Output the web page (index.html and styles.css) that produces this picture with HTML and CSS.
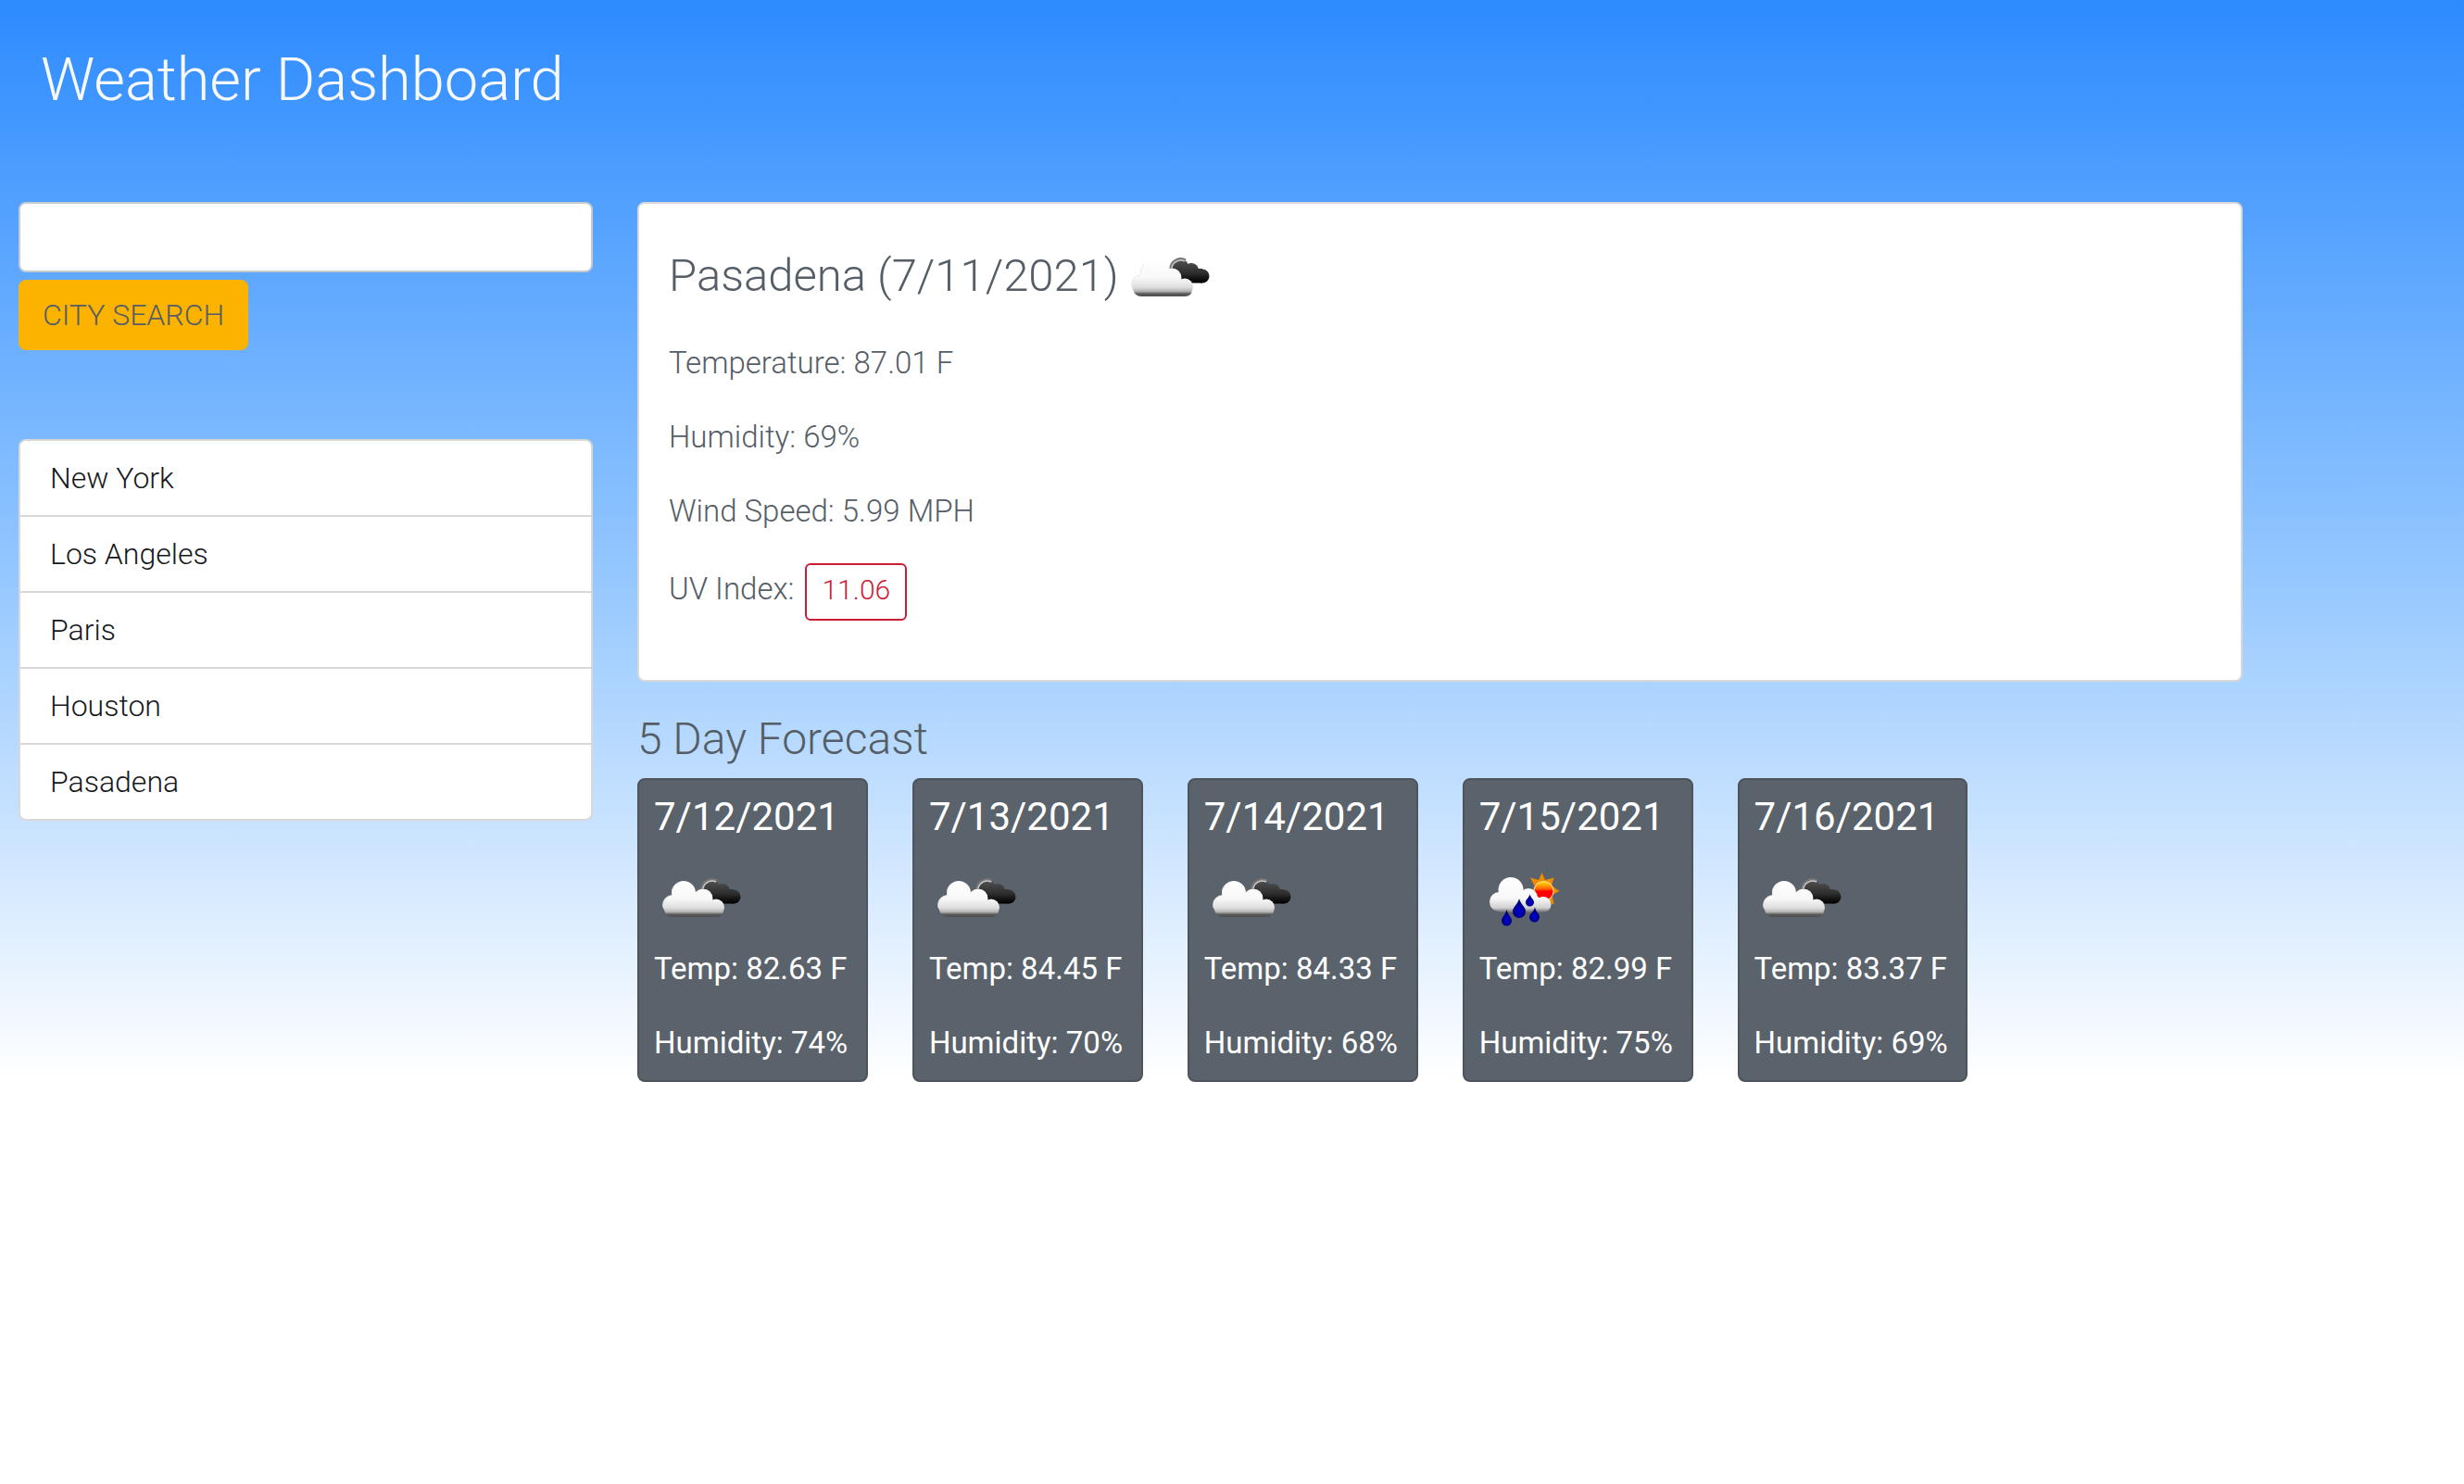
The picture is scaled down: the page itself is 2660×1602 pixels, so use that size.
FILE: index.html
```
<!DOCTYPE html>
<html lang="en">
<head>
  <meta charset="utf-8">
  <meta name="viewport" content="width=device-width, initial-scale=1">
  <title>Weather Dashboard</title>
  <link rel="stylesheet" href="styles.css">
</head>
<body>
  <svg class="icon-defs" aria-hidden="true">
    <defs>
      <linearGradient id="cloud-light" gradientUnits="userSpaceOnUse" x1="0" y1="28" x2="0" y2="68">
        <stop offset="0" stop-color="#ffffff"/>
        <stop offset=".5" stop-color="#f8f8f8"/>
        <stop offset=".75" stop-color="#dedede"/>
        <stop offset=".86" stop-color="#b4b4b4"/>
        <stop offset=".93" stop-color="#5a5a5a"/>
        <stop offset="1" stop-color="#4e4e4e"/>
      </linearGradient>
      <linearGradient id="cloud-dark" gradientUnits="userSpaceOnUse" x1="0" y1="27" x2="0" y2="53">
        <stop offset="0" stop-color="#555555"/>
        <stop offset=".6" stop-color="#2e2e2e"/>
        <stop offset="1" stop-color="#000000"/>
      </linearGradient>
      <linearGradient id="cloud-rain" gradientUnits="userSpaceOnUse" x1="0" y1="25" x2="0" y2="63">
        <stop offset="0" stop-color="#ffffff"/>
        <stop offset=".6" stop-color="#f8f8f8"/>
        <stop offset=".87" stop-color="#d0d0d0"/>
        <stop offset="1" stop-color="#666666"/>
      </linearGradient>
      <linearGradient id="sun-disc" x1="0" y1="0" x2="0" y2="1">
        <stop offset="0" stop-color="#ffe000"/>
        <stop offset=".4" stop-color="#ff5a00"/>
        <stop offset=".5" stop-color="#ff0000"/>
      </linearGradient>
      <radialGradient id="drop-fill" cx=".5" cy=".65" r=".5">
        <stop offset="0" stop-color="#0000dc"/>
        <stop offset="1" stop-color="#00006e"/>
      </radialGradient>
      <filter id="soften" x="-5%" y="-5%" width="110%" height="110%">
        <feGaussianBlur stdDeviation=".6"/>
      </filter>
      <symbol id="icon-clouds" viewBox="0 0 100 100">
        <g filter="url(#soften)">
          <g fill="url(#cloud-dark)">
            <circle cx="62" cy="37" r="9.500"/>
            <circle cx="74" cy="40" r="8"/>
            <circle cx="86" cy="46" r="7.500"/>
            <rect x="56" y="38" width="30" height="15.500"/>
          </g>
          <path d="M50 41Q52 40 52 36A11 11 0 0 1 68 29" fill="none" stroke="#777" stroke-width="3"/>
          <path d="M53 37A10 10 0 0 1 67 30" fill="none" stroke="#c8c8c8" stroke-width="1.500"/>
          <g fill="url(#cloud-light)">
            <circle cx="32" cy="42" r="13"/>
            <circle cx="20" cy="55" r="10.500"/>
            <circle cx="53" cy="48" r="10.500"/>
            <circle cx="67" cy="57.500" r="9"/>
            <path d="M12 54H75V60Q75 68 67 68H20Q13 68 11 60Z"/>
            <rect x="30" y="44" width="24" height="20"/>
          </g>
          <path d="M23 33A13 13 0 0 0 19.500 44.500A10.500 10.500 0 0 0 10 58" fill="none" stroke="#e6e6e6" stroke-width=".8"/>
        </g>
      </symbol>
      <symbol id="icon-rain" viewBox="0 0 100 100">
        <g filter="url(#soften)">
          <path fill="#f08c00" d="M67.500 20L71 28L80.500 25.500L78 34L86.500 40L78.500 44L80.500 54L70 52L58 40L60 35L55 25.500L64 28Z"/>
          <circle cx="69.500" cy="40" r="11" fill="#ffd58a"/>
          <circle cx="69.500" cy="40" r="10" fill="url(#sun-disc)"/>
          <g fill="url(#cloud-rain)">
            <circle cx="34" cy="38.500" r="13.500"/>
            <circle cx="21.500" cy="51.500" r="10.500"/>
            <circle cx="53" cy="47" r="10"/>
            <circle cx="69" cy="54.500" r="8.500"/>
            <path d="M22 40H54L69 50V63H22Z"/>
          </g>
          <g fill="url(#drop-fill)">
            <path d="M29.500 60C31 66 35 68 35 72A5.500 5.500 0 0 1 24 72C24 68 28 66 29.500 60Z"/>
            <path d="M43 48C45 55 50 57 50 62A7 7 0 0 1 36 62C36 57 41 55 43 48Z"/>
            <path d="M54.500 43.500C56 48 59 49 59 52A4.500 4.500 0 0 1 50 52C50 49 53 48 54.500 43.500Z"/>
            <path d="M60 57C61 63 65 64 65 68A5.500 5.500 0 0 1 54 68C54 64 59 63 60 57Z"/>
          </g>
        </g>
      </symbol>
    </defs>
  </svg>

  <header class="page-header">
    <h1>Weather Dashboard</h1>
  </header>

  <main class="layout">
    <aside class="sidebar">
      <form class="search" onsubmit="return false">
        <input class="search-input" type="text" aria-label="City">
        <button class="search-button" type="submit">CITY SEARCH</button>
      </form>
      <ul class="history">
        <li>New York</li>
        <li>Los Angeles</li>
        <li>Paris</li>
        <li>Houston</li>
        <li>Pasadena</li>
      </ul>
    </aside>

    <div class="content">
      <section class="current">
        <h2 class="current-title">Pasadena (7/11/2021) <svg class="weather-icon" role="img" aria-label="Broken clouds"><use href="#icon-clouds"/></svg></h2>
        <p>Temperature: 87.01 F</p>
        <p>Humidity: 69%</p>
        <p>Wind Speed: 5.99 MPH</p>
        <p>UV Index: <button class="uv" type="button">11.06</button></p>
      </section>

      <section>
        <h2 class="forecast-title">5 Day Forecast</h2>
        <div class="forecast">
          <article class="day">
            <h3>7/12/2021</h3>
            <svg class="weather-icon" role="img" aria-label="Broken clouds"><use href="#icon-clouds"/></svg>
            <p>Temp: 82.63 F</p>
            <p>Humidity: 74%</p>
          </article>
          <article class="day">
            <h3>7/13/2021</h3>
            <svg class="weather-icon" role="img" aria-label="Broken clouds"><use href="#icon-clouds"/></svg>
            <p>Temp: 84.45 F</p>
            <p>Humidity: 70%</p>
          </article>
          <article class="day">
            <h3>7/14/2021</h3>
            <svg class="weather-icon" role="img" aria-label="Broken clouds"><use href="#icon-clouds"/></svg>
            <p>Temp: 84.33 F</p>
            <p>Humidity: 68%</p>
          </article>
          <article class="day">
            <h3>7/15/2021</h3>
            <svg class="weather-icon" role="img" aria-label="Rain with sun"><use href="#icon-rain"/></svg>
            <p>Temp: 82.99 F</p>
            <p>Humidity: 75%</p>
          </article>
          <article class="day">
            <h3>7/16/2021</h3>
            <svg class="weather-icon" role="img" aria-label="Broken clouds"><use href="#icon-clouds"/></svg>
            <p>Temp: 83.37 F</p>
            <p>Humidity: 69%</p>
          </article>
        </div>
      </section>
    </div>
  </main>
</body>
</html>
```
FILE: styles.css
```
*,
*::before,
*::after {
  box-sizing: border-box;
}

html {
  background: #fff;
}

body {
  margin: 0;
  background: linear-gradient(#2d8bff, #92c6ff 52%, #fff);
  color: #555d66;
  font-family: Roboto, "Open Sans", sans-serif;
  font-size: 33px;
  font-weight: 300;
  line-height: 48px;
}

h1,
h2,
h3,
p,
ul {
  margin: 0;
  padding: 0;
  font-weight: inherit;
}

.icon-defs {
  position: absolute;
  width: 0;
  height: 0;
}

.weather-icon {
  width: 100px;
  height: 100px;
  flex: none;
}

.page-header {
  padding: 48px 44px 94px;
}

.page-header h1 {
  color: #f8f9fa;
  font-size: 65px;
  line-height: 76px;
}

.layout {
  display: grid;
  grid-template-columns: repeat(12, minmax(0, 1fr));
  column-gap: 48px;
  padding: 0 16px 0 20px;
}

.sidebar {
  grid-column: span 3;
  font-size: 32px;
}

.content {
  grid-column: span 8;
}

.search {
  display: flex;
  flex-direction: column;
  align-items: flex-start;
  gap: 8px;
  margin-bottom: 96px;
}

.search-input,
.search-button {
  height: 76px;
  border-radius: 8px;
  font: inherit;
}

.search-input {
  width: 100%;
  padding: 12px 24px;
  border: 2px solid #c5cbd1;
  background: #fff;
  color: #212529;
}

.search-button {
  padding: 0 24px;
  border: 2px solid #fcb300;
  background: #fcb300;
  color: #555d66;
}

.history {
  list-style: none;
  overflow: hidden;
  border: 2px solid #d8d8d8;
  border-radius: 8px;
  background: #fff;
  color: #16191c;
}

.history li {
  padding: 16px 32px;
}

.history li + li {
  border-top: 2px solid #d8d8d8;
}

.current {
  display: grid;
  gap: 32px;
  padding: 32px;
  padding-bottom: 64px;
  border: 2px solid #d8d8d8;
  border-radius: 8px;
  background: #fff;
}

.current-title {
  display: flex;
  align-items: flex-start;
  gap: 4px;
  margin-bottom: -16px;
  font-size: 49px;
  line-height: 92px;
}

.uv {
  height: 62px;
  padding: 0 16px 4px;
  border: 2px solid #cc1c36;
  border-radius: 6px;
  background: transparent;
  color: #cc1c36;
  font: inherit;
  font-size: 30px;
}

.current p:last-child {
  display: flex;
  align-items: baseline;
  gap: 12px;
}

.forecast-title {
  margin: 32px 0 12px;
  font-size: 48px;
  line-height: 60px;
}

.forecast {
  display: grid;
  grid-template-columns: repeat(6, minmax(0, 1fr));
  column-gap: 48px;
}

.day {
  display: flex;
  flex-direction: column;
  padding: 16px;
  border: 2px solid #4d545b;
  border-radius: 8px;
  background: #5a626b;
  color: #fff;
  font-weight: 400;
  white-space: nowrap;
}

.day h3 {
  margin-bottom: 16px;
  font-size: 42px;
}

.day p + p {
  margin-top: 32px;
}
```
